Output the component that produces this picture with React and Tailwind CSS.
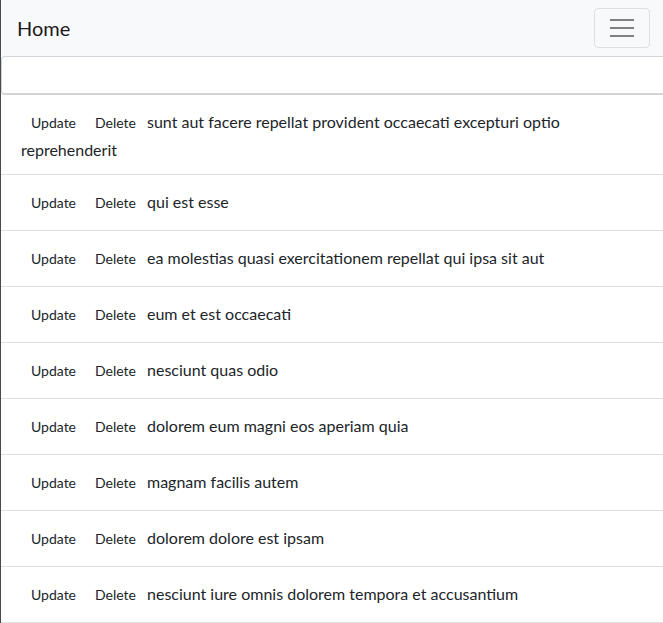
import React from 'react'

const posts = [
  'sunt aut facere repellat provident occaecati excepturi optio reprehenderit',
  'qui est esse',
  'ea molestias quasi exercitationem repellat qui ipsa sit aut',
  'eum et est occaecati',
  'nesciunt quas odio',
  'dolorem eum magni eos aperiam quia',
  'magnam facilis autem',
  'dolorem dolore est ipsam',
  'nesciunt iure omnis dolorem tempora et accusantium',
]

export default function App() {
  return (
    <div
      className="min-h-screen bg-white border-l border-[#4a4a4a] text-[#212529] overflow-hidden"
      style={{ fontFamily: '"Lato", "Open Sans", "Liberation Sans", sans-serif' }}
    >
      <nav className="h-[56px] bg-[#f8f9fa] flex items-center justify-between pl-4 pr-[13px]">
        <a className="text-[20px] leading-[30px] text-[#1a1a1a]">Home</a>
        <button className="w-[56px] h-[40px] border border-[rgba(0,0,0,0.1)] rounded-[4px] flex flex-col items-center justify-center gap-[6px]">
          <span className="block w-[24px] h-[2px] bg-[#808080]" />
          <span className="block w-[24px] h-[2px] bg-[#808080]" />
          <span className="block w-[24px] h-[2px] bg-[#808080]" />
        </button>
      </nav>

      <input
        type="text"
        className="block w-[calc(100%+4px)] h-[39px] border border-[#ced4da] border-b-2 border-b-[#d4d4d4] rounded-[4px] bg-white px-3 outline-none"
      />

      <ul>
        {posts.map((title, idx) => (
          <li key={idx} className="border-b border-[#dfdfdf] px-5 py-3 text-[16px] leading-[24px] -mr-[2px]">
            <button className="inline-block border border-transparent px-[9px] py-1 text-[14px] leading-[21px] text-[#212529]">
              Update
            </button>
            <button className="inline-block border border-transparent pl-2 pr-[9px] py-1 text-[14px] leading-[21px] text-[#212529]">
              Delete
            </button>
            <span className="ml-[1px]">{title}</span>
          </li>
        ))}
      </ul>
    </div>
  )
}
